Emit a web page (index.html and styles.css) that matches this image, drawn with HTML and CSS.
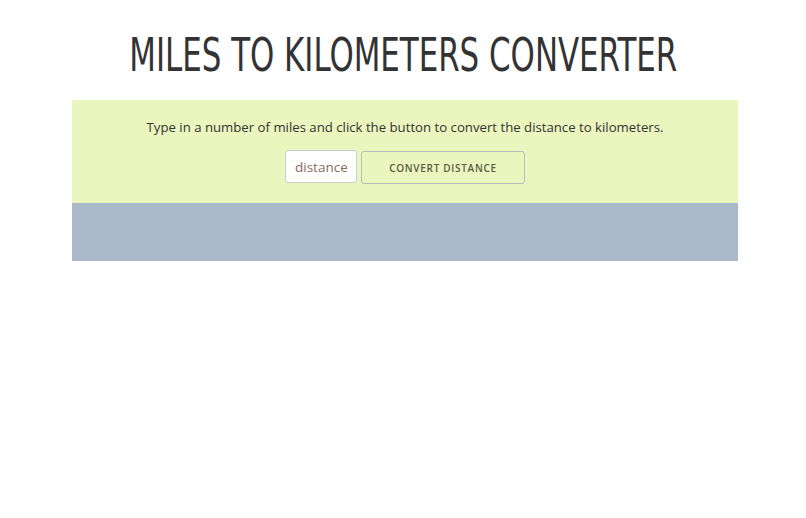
FILE: index.html
```html
<!DOCTYPE html>
<html>
<head>
<meta charset="utf-8">
<link rel="stylesheet" href="styles.css">
</head>
<body>
<h1 class="title"><span class="title-text">MILES TO KILOMETERS CONVERTER</span></h1>
<div class="panel">
  <p class="intro">Type in a number of miles and click the button to convert the distance to kilometers.</p>
  <div class="controls">
    <input class="distance" type="text" placeholder="distance">
    <button class="convert">CONVERT DISTANCE</button>
  </div>
</div>
<div class="result"></div>
</body>
</html>
```
FILE: styles.css
```css
html, body { margin: 0; padding: 0; background: #fff; }
body { font-family: "Open Sans", sans-serif; color: #333; }
.title {
  margin: 0;
  padding-top: 30px;
  height: 70px;
  box-sizing: border-box;
  text-align: center;
  font-family: "DejaVu Sans", sans-serif;
  font-stretch: condensed;
  font-weight: 400;
  font-size: 47px;
  line-height: 50px;
  color: #333;
  white-space: nowrap;
}
.title-text { display: inline-block; transform: scaleX(0.73); transform-origin: center; }
.panel {
  margin: 30px 68px 0 72px;
  background: #ebf5be;
  height: 103px;
  box-sizing: border-box;
  padding-top: 17px;
  text-align: center;
}
.intro { margin: 0; font-size: 13.2px; line-height: 20px; color: #333; }
.controls { display: flex; justify-content: center; gap: 4px; margin-top: 13px; }
.distance {
  width: 72px; height: 33px; box-sizing: border-box;
  border: 1px solid #ccc; border-radius: 3px; background: #fff;
  font-family: "Open Sans", sans-serif; font-size: 13.5px; padding: 0 9px; color: #8a6a5a;
}
.distance::placeholder { color: #8a6a5a; }
.convert {
  width: 164px; height: 33px; margin-top: 1px; box-sizing: border-box;
  border: 1px solid #bbb; border-radius: 3px; background: #ebf5be;
  font-family: "Open Sans", sans-serif; font-weight: 600; font-size: 10px; letter-spacing: 0.7px; color: #5a5a45;
}
.result { margin: 0 68px 0 72px; height: 58px; background: #aabacb; }
```
